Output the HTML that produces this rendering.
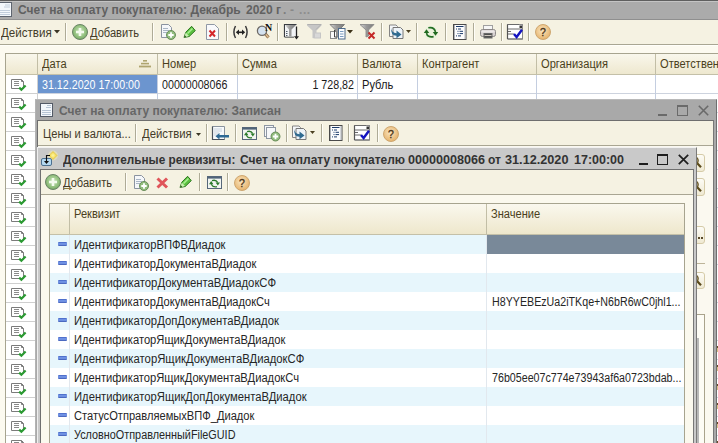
<!DOCTYPE html>
<html><head><meta charset="utf-8">
<style>
*{margin:0;padding:0;box-sizing:border-box}
html,body{width:718px;height:443px;overflow:hidden;background:#fcfaf0;font-family:"Liberation Sans",sans-serif;font-size:11px}
.a{position:absolute}
.t{position:absolute;white-space:nowrap;line-height:13px;font-size:12px;transform:scaleX(0.925);transform-origin:0 0}
.n{transform:scaleX(0.89)}
.b{font-size:12px;font-weight:bold;transform:none}
.sep{position:absolute;width:2px;background:#aeab97;border-right:1px solid #fffef8}
svg{position:absolute;overflow:visible}
</style></head><body>
<div id="root" class="a" style="left:0;top:0;width:718px;height:443px;overflow:hidden">

<!-- ============ MAIN WINDOW ============ -->
<div class="a" style="left:0;top:0;width:718px;height:20px;background:#ababab;border-top:1px solid #5f5f5f"></div>
<div class="a" style="left:0;top:1px;width:718px;height:1px;background:#c4c4c4"></div>
<div class="a" style="left:0;top:19px;width:718px;height:1px;background:#8f8f8f"></div>
<!-- doc icon main title -->
<svg style="left:0;top:2px" width="13" height="15" viewBox="0 0 13 15">
  <rect x="-1.5" y="0.5" width="13" height="14" fill="#f4f8fc" stroke="#5e6570"/>
  <g stroke="#c2cedc"><line x1="5" y1="3" x2="10" y2="3"/><line x1="4" y1="5" x2="10" y2="5"/><line x1="0" y1="8.5" x2="10" y2="8.5"/><line x1="0" y1="10.5" x2="10" y2="10.5"/><line x1="0" y1="12.5" x2="10" y2="12.5"/></g>
</svg>
<div class="t b" style="left:18px;top:4px;color:#606060">Счет на оплату покупателю: Декабрь</div>
<div class="t b" style="left:246px;top:4px;color:#626262">2020 г</div>
<div class="t b" style="left:283px;top:4px;color:#7e7e7e">.</div>
<div class="t b" style="left:290px;top:4px;color:#888">-</div>
<div class="t b" style="left:299px;top:4px;color:#8e8e8e;letter-spacing:0.6px">...</div>

<!-- toolbar main -->
<div class="a" style="left:0;top:20px;width:718px;height:24px;background:#f5f2e2"></div>
<div class="a" style="left:0;top:44px;width:718px;height:1px;background:#a9a693"></div>
<div class="a" style="left:0;top:45px;width:718px;height:1px;background:#fffffa"></div>

<div class="t" style="left:1px;top:27px;color:#433b29;transform:scaleX(0.965)">Действия</div>
<svg style="left:54px;top:30px" width="6" height="4"><path d="M0 0H6L3 3.5Z" fill="#3b3625"/></svg>
<div class="sep" style="left:65px;top:23px;height:18px"></div>

<!-- add circle -->
<svg style="left:72px;top:24px" width="16" height="16" viewBox="0 0 16 16">
  <defs><radialGradient id="gc" cx="0.5" cy="0.45" r="0.6"><stop offset="0" stop-color="#cfe8c0"/><stop offset="0.7" stop-color="#8cbc78"/><stop offset="1" stop-color="#6e9a5e"/></radialGradient></defs>
  <circle cx="8" cy="8" r="7.5" fill="url(#gc)" stroke="#6a8466" stroke-width="1"/>
  <path d="M8 4V12M4 8H12" stroke="#f4fbee" stroke-width="2.6"/>
</svg>
<div class="t" style="left:90px;top:27px;color:#433b29">Добавить</div><div class="a" style="left:90px;top:39px;width:9px;height:1px;background:#8a7840"></div>
<div class="sep" style="left:152px;top:23px;height:18px"></div>

<!-- copy doc plus -->
<svg style="left:160px;top:24px" width="16" height="16" viewBox="0 0 16 16">
  <path d="M1.5 0.5H8.5L11.5 3.5V13.5H1.5Z" fill="#f5f7fa" stroke="#8a93a0"/>
  <g stroke="#a9b6c6"><line x1="3" y1="4.5" x2="8" y2="4.5"/><line x1="3" y1="6.5" x2="9" y2="6.5"/><line x1="3" y1="8.5" x2="7" y2="8.5"/></g>
  <circle cx="11" cy="11" r="4.5" fill="#92bd7e" stroke="#5f8550" stroke-width="0.9"/>
  <path d="M11 8.3V13.7M8.3 11H13.7" stroke="#fff" stroke-width="1.8"/>
</svg>
<!-- pencil -->
<svg style="left:183px;top:26px" width="14" height="13" viewBox="0 0 14 13">
  <path d="M1 11.5L2.8 6.2L8.6 0.3L12.3 4.6L6.2 10.5Z" fill="#5cc040" stroke="#1f6a14" stroke-width="0.9"/>
  <path d="M4.5 7.5L9.5 2.5" stroke="#a8f090" stroke-width="1.6"/>
  <path d="M1 11.5L2.8 6.5L6 10Z" fill="#c8f0b0"/>
  <path d="M1 11.5L1.8 9.3L3.2 10.7Z" fill="#1f4a10"/>
</svg>
<!-- delete doc -->
<svg style="left:206px;top:24px" width="13" height="16" viewBox="0 0 13 16">
  <path d="M0.5 0.5H8.5L12.5 4.5V15.5H0.5Z" fill="#f8f9fb" stroke="#8f98a5"/>
  <path d="M3.5 6.5L9 12.5M9 6.5L3.5 12.5" stroke="#d4262a" stroke-width="2"/>
</svg>
<div class="sep" style="left:226px;top:23px;height:18px"></div>
<!-- (<->) -->
<svg style="left:232px;top:25px" width="17" height="14" viewBox="0 0 17 14">
  <path d="M3.5 1Q0.3 7 3.5 13M13.5 1Q16.7 7 13.5 13" fill="none" stroke="#3a3a3a" stroke-width="1.5"/>
  <path d="M6 7.3H11" stroke="#222" stroke-width="1.6"/>
  <path d="M3.8 7.3L7 4.6V10Z M13.2 7.3L10 4.6V10Z" fill="#222"/>
</svg>
<!-- search N -->
<svg style="left:256px;top:23px" width="17" height="17" viewBox="0 0 17 17">
  <path d="M9 10.5L12.5 14.5" stroke="#8a6a44" stroke-width="3"/>
  <path d="M9 10.5L12.5 14.5" stroke="#e0c098" stroke-width="1.4"/>
  <circle cx="6" cy="7.7" r="4.6" fill="#d4e2f0" stroke="#6e6a66" stroke-width="1.3"/>
  <text x="12.5" y="8" text-anchor="middle" font-family="Liberation Serif" font-weight="bold" font-size="10" fill="#111">N</text>
</svg>
<div class="sep" style="left:277px;top:23px;height:18px"></div>
<!-- filter 1 -->
<svg style="left:284px;top:24px" width="16" height="16" viewBox="0 0 16 16">
  <defs><linearGradient id="fg" x1="0" x2="1"><stop offset="0" stop-color="#d8d8d8"/><stop offset="0.45" stop-color="#9a9a9a"/><stop offset="1" stop-color="#7a7a7a"/></linearGradient></defs>
  <path d="M0.5 13V0.5H12.5" fill="none" stroke="#3a3d42" stroke-width="1.2"/>
  <path d="M0.5 13H10" stroke="#3a3d42" stroke-width="1.2"/>
  <rect x="1" y="1" width="11" height="11.5" fill="#f2f4f6"/>
  <path d="M1 1H12L7.5 5.5V12.5H5V5.5Z" fill="url(#fg)"/>
  <g fill="#55606c"><rect x="2" y="7" width="1.5" height="1"/><rect x="2" y="9" width="1.5" height="1"/><rect x="2" y="11" width="1.5" height="1"/></g>
  <path d="M12.5 2.5V13" stroke="#222" stroke-width="1.3"/><path d="M10 12.3H15L12.5 15.5Z" fill="#222"/>
</svg>
<!-- filter 2 disabled -->
<svg style="left:307px;top:24px" width="16" height="16" viewBox="0 0 16 16">
  <path d="M0 0H14.5L14.5 1.5L9.5 6.5V8.5L14 8.5V14.5H7.5V14.5L5.5 14V6.5L0 1.5Z" fill="#c6c6c6"/>
  <path d="M0.5 0.5H14L9 5.5" fill="none" stroke="#b0b0b0"/>
  <path d="M8 9.5H13V13.5H8Z" fill="#d8d8d8"/>
</svg>
<!-- filter 3 -->
<svg style="left:330px;top:24px" width="16" height="16" viewBox="0 0 16 16">
  <path d="M0 0.5H14.5L9 6V13H5.5V6Z" fill="url(#fg)" stroke="#707070" stroke-width="0.8"/>
  <rect x="0.5" y="7.5" width="6" height="7" fill="#fafafa" stroke="#8a8a8a"/>
  <rect x="8.5" y="4.5" width="6.5" height="10.5" fill="#fafcfe" stroke="#4f6b8a"/>
  <g stroke="#7a9cc0"><line x1="10" y1="7.5" x2="13.5" y2="7.5"/><line x1="10" y1="10" x2="13.5" y2="10"/><line x1="10" y1="12.5" x2="13.5" y2="12.5"/></g>
  <path d="M4.5 6V13H6.5" fill="none" stroke="#444" stroke-width="1"/>
</svg>
<svg style="left:347px;top:30px" width="6" height="4"><path d="M0 0H6L3 3.5Z" fill="#3b3118"/></svg>
<!-- filter 4 with x -->
<svg style="left:360px;top:24px" width="16" height="16" viewBox="0 0 16 16">
  <path d="M0 0.5H14L8.5 6V12L6 13V6Z" fill="url(#fg)" stroke="#8a8a8a" stroke-width="0.9"/>
  <path d="M8.5 8.5L14.5 14.5M14.5 8.5L8.5 14.5" stroke="#c42828" stroke-width="2"/>
</svg>
<div class="sep" style="left:381px;top:23px;height:18px"></div>
<!-- docs arrow -->
<svg style="left:388px;top:24px" width="16" height="16" viewBox="0 0 16 16">
  <path d="M1.5 1H8L9.5 2.5V12.5H1.5Z" fill="#f4f6f8" stroke="#858585"/>
  <path d="M5 3.5H12.5L15 6V14.5H5Z" fill="#edf3f8" stroke="#777"/>
  <path d="M3.2 4Q3.6 9 8.5 9.3V6.6L13.5 10.4L8.5 14.2V11.8Q2.5 11.8 3.2 4Z" fill="#2f6a90"/>
</svg>
<svg style="left:406px;top:30px" width="5" height="3"><path d="M0 0H5L2.5 3Z" fill="#4a3f20"/></svg>
<div class="sep" style="left:416px;top:23px;height:18px"></div>
<!-- refresh -->
<svg style="left:422px;top:26px" width="18" height="14" viewBox="0 0 18 14">
  <circle cx="9" cy="7" r="7" fill="#e4f4d8" opacity="0.6"/>
  <path d="M6.3 1.8Q12.3 0.6 13.5 6" fill="none" stroke="#246e24" stroke-width="1.6"/>
  <path d="M10.8 6H16.2L13.5 9.8Z" fill="#1f6a1f"/>
  <path d="M11.6 10.6Q5.3 11.8 4.5 7" fill="none" stroke="#246e24" stroke-width="1.6"/>
  <path d="M1.8 7H7.2L4.5 3.2Z" fill="#1f6a1f"/>
</svg>
<div class="sep" style="left:445px;top:23px;height:18px"></div>
<!-- list doc -->
<svg style="left:453px;top:24px" width="14" height="16" viewBox="0 0 14 16">
  <rect x="0.5" y="0.5" width="12.5" height="15" fill="#fdfdfd" stroke="#4a4a4a"/>
  <path d="M1.5 1V15M12 1V15" stroke="#b0b4ba"/>
  <path d="M3 2.5H10.5" stroke="#1a3a6a" stroke-width="1"/>
  <g fill="#1a3a6a"><rect x="3" y="4.5" width="1" height="1"/><rect x="4.5" y="6.8" width="1" height="1"/><rect x="4.5" y="9.1" width="1" height="1"/><rect x="3" y="11.4" width="1" height="1"/></g>
  <g stroke="#1a3a6a" stroke-width="1"><path d="M5 5H8"/><path d="M6.5 7.3H10"/><path d="M6.5 9.6H10"/><path d="M5 11.9H8"/></g>
</svg>
<div class="sep" style="left:473px;top:23px;height:18px"></div>
<!-- printer -->
<svg style="left:480px;top:25px" width="16" height="14" viewBox="0 0 16 14">
  <rect x="3.5" y="0.5" width="9" height="5" fill="#f6f6f6" stroke="#a0a0a0"/>
  <rect x="0.5" y="4.5" width="15" height="7" rx="2" fill="#d8d2d2" stroke="#8c8888"/>
  <rect x="1.5" y="5.5" width="13" height="2" fill="#ece8e8"/>
  <rect x="4" y="8.5" width="8" height="4.5" fill="#505050" stroke="#6a6a6a"/>
  <line x1="4.5" y1="10.5" x2="11.5" y2="10.5" stroke="#cfc8c0"/>
</svg>
<div class="sep" style="left:501px;top:23px;height:18px"></div>
<!-- checklist -->
<svg style="left:507px;top:24px" width="17" height="16" viewBox="0 0 17 16">
  <rect x="0.5" y="0.5" width="15" height="14.5" fill="#fff" stroke="#8a8a8a"/>
  <path d="M0.5 0.5V15" stroke="#555" stroke-width="1.2"/>
  <rect x="12.5" y="1.5" width="2.5" height="2.5" fill="#333"/>
  <g stroke="#6a6a6a"><line x1="1" y1="0.5" x2="12" y2="0.5"/><line x1="1" y1="5" x2="15.5" y2="5"/><line x1="1" y1="10" x2="7" y2="10"/><line x1="1" y1="15" x2="15.5" y2="15"/><line x1="1" y1="7.5" x2="4" y2="7.5"/></g>
  <path d="M7 10L9.6 13L15 5.8" fill="none" stroke="#1414c0" stroke-width="2.4"/>
</svg>
<div class="sep" style="left:528px;top:23px;height:18px"></div>
<!-- help -->
<svg style="left:535px;top:24px" width="17" height="17" viewBox="0 0 17 17">
  <defs><radialGradient id="hg" cx="0.45" cy="0.4" r="0.7"><stop offset="0" stop-color="#fae6c0"/><stop offset="1" stop-color="#e2aa5e"/></radialGradient></defs>
  <circle cx="8" cy="8" r="7.5" fill="url(#hg)" stroke="#c9a26a" stroke-width="0.9"/>
  <text x="8" y="12" text-anchor="middle" font-family="Liberation Sans" font-size="10.5" fill="#4a3418" stroke="#4a3418" stroke-width="0.35">?</text>
</svg>

<!-- main table -->
<div class="a" style="left:5px;top:53px;width:713px;height:400px;background:#fff;border-top:1px solid #a7a48f;border-left:1px solid #a7a48f"></div>
<div class="a" style="left:6px;top:54px;width:712px;height:20px;background:linear-gradient(#f9f7ec,#eee8cf)"></div>
<div class="a" style="left:6px;top:74px;width:712px;height:1px;background:#c4c0a8"></div>
<div id="hcols"></div>
<div class="t" style="left:42px;top:58px;color:#4a3f20">Дата</div>
<svg style="left:139px;top:60px" width="13" height="8"><g fill="#aea46e"><rect x="4" y="0" width="4" height="1.6"/><rect x="2" y="2.8" width="8" height="1.6"/><rect x="0" y="5.6" width="12" height="1.8"/></g></svg>
<div class="t" style="left:162px;top:58px;color:#4a3f20">Номер</div>
<div class="t" style="left:242px;top:58px;color:#4a3f20">Сумма</div>
<div class="t" style="left:362px;top:58px;color:#4a3f20">Валюта</div>
<div class="t" style="left:422px;top:58px;color:#4a3f20">Контрагент</div>
<div class="t" style="left:541px;top:58px;color:#4a3f20">Организация</div>
<div class="t" style="left:660px;top:58px;color:#4a3f20">Ответственный</div>
<!-- header column dividers -->
<div class="a" style="left:37px;top:54px;width:1px;height:20px;background:#c2bea6"></div>
<div class="a" style="left:157px;top:54px;width:1px;height:20px;background:#c2bea6"></div>
<div class="a" style="left:237px;top:54px;width:1px;height:20px;background:#c2bea6"></div>
<div class="a" style="left:357px;top:54px;width:1px;height:20px;background:#c2bea6"></div>
<div class="a" style="left:417px;top:54px;width:1px;height:20px;background:#c2bea6"></div>
<div class="a" style="left:536px;top:54px;width:1px;height:20px;background:#c2bea6"></div>
<div class="a" style="left:655px;top:54px;width:1px;height:20px;background:#c2bea6"></div>
<!-- body grid -->
<div class="a" style="left:6px;top:75px;width:712px;height:380px;background-image:linear-gradient(#cdd3de 1px,transparent 1px);background-size:100% 19px;background-position:0 18px"></div>
<div class="a" style="left:6px;top:75px;width:31px;height:380px;background-image:linear-gradient(#cfcfcf 1px,transparent 1px);background-size:100% 19px;background-position:0 18px"></div>
<div class="a" style="left:37px;top:75px;width:1px;height:380px;background:#d0d0d0"></div>
<div class="a" style="left:157px;top:75px;width:1px;height:380px;background:#c4cee0"></div>
<div class="a" style="left:237px;top:75px;width:1px;height:380px;background:#c4cee0"></div>
<div class="a" style="left:357px;top:75px;width:1px;height:380px;background:#c4cee0"></div>
<div class="a" style="left:417px;top:75px;width:1px;height:380px;background:#c4cee0"></div>
<div class="a" style="left:536px;top:75px;width:1px;height:380px;background:#c4cee0"></div>
<div class="a" style="left:655px;top:75px;width:1px;height:380px;background:#c4cee0"></div>
<!-- selected cell -->
<div class="a" style="left:38px;top:75px;width:119px;height:18px;background:#6c95cf"></div>
<div class="t n" style="left:42px;top:79px;color:#fff">31.12.2020 17:00:00</div>
<div class="t n" style="left:162px;top:79px;color:#1a1a1a">00000008066</div>
<div class="t n" style="left:300px;top:79px;color:#1a1a1a;width:54px;text-align:right;transform-origin:100% 0">1 728,82</div>
<div class="t" style="left:362px;top:79px;color:#1a1a1a">Рубль</div>
<svg style="left:11px;top:79px" width="16" height="12" viewBox="0 0 16 12">
<path d="M0.5 0.5H10.5L12.5 2.5V9.5H0.5Z" fill="#fff" stroke="#7b7b7b"/>
<path d="M10.5 0.5V2.5H12.5" fill="none" stroke="#7b7b7b"/>
<g stroke="#8a8a8a"><line x1="3" y1="2.5" x2="8" y2="2.5"/><line x1="3" y1="4.5" x2="8" y2="4.5"/><line x1="3" y1="6.5" x2="8" y2="6.5"/></g>
<path d="M8.2 8.6L10.4 10.8L14.6 6.4" fill="none" stroke="#2b9a32" stroke-width="2.2"/>
</svg><svg style="left:11px;top:98px" width="16" height="12" viewBox="0 0 16 12">
<path d="M0.5 0.5H10.5L12.5 2.5V9.5H0.5Z" fill="#fff" stroke="#7b7b7b"/>
<path d="M10.5 0.5V2.5H12.5" fill="none" stroke="#7b7b7b"/>
<g stroke="#8a8a8a"><line x1="3" y1="2.5" x2="8" y2="2.5"/><line x1="3" y1="4.5" x2="8" y2="4.5"/><line x1="3" y1="6.5" x2="8" y2="6.5"/></g>
<path d="M8.2 8.6L10.4 10.8L14.6 6.4" fill="none" stroke="#2b9a32" stroke-width="2.2"/>
</svg><svg style="left:11px;top:117px" width="16" height="12" viewBox="0 0 16 12">
<path d="M0.5 0.5H10.5L12.5 2.5V9.5H0.5Z" fill="#fff" stroke="#7b7b7b"/>
<path d="M10.5 0.5V2.5H12.5" fill="none" stroke="#7b7b7b"/>
<g stroke="#8a8a8a"><line x1="3" y1="2.5" x2="8" y2="2.5"/><line x1="3" y1="4.5" x2="8" y2="4.5"/><line x1="3" y1="6.5" x2="8" y2="6.5"/></g>
<path d="M8.2 8.6L10.4 10.8L14.6 6.4" fill="none" stroke="#2b9a32" stroke-width="2.2"/>
</svg><svg style="left:11px;top:136px" width="16" height="12" viewBox="0 0 16 12">
<path d="M0.5 0.5H10.5L12.5 2.5V9.5H0.5Z" fill="#fff" stroke="#7b7b7b"/>
<path d="M10.5 0.5V2.5H12.5" fill="none" stroke="#7b7b7b"/>
<g stroke="#8a8a8a"><line x1="3" y1="2.5" x2="8" y2="2.5"/><line x1="3" y1="4.5" x2="8" y2="4.5"/><line x1="3" y1="6.5" x2="8" y2="6.5"/></g>
<path d="M8.2 8.6L10.4 10.8L14.6 6.4" fill="none" stroke="#2b9a32" stroke-width="2.2"/>
</svg><svg style="left:11px;top:155px" width="16" height="12" viewBox="0 0 16 12">
<path d="M0.5 0.5H10.5L12.5 2.5V9.5H0.5Z" fill="#fff" stroke="#7b7b7b"/>
<path d="M10.5 0.5V2.5H12.5" fill="none" stroke="#7b7b7b"/>
<g stroke="#8a8a8a"><line x1="3" y1="2.5" x2="8" y2="2.5"/><line x1="3" y1="4.5" x2="8" y2="4.5"/><line x1="3" y1="6.5" x2="8" y2="6.5"/></g>
<path d="M8.2 8.6L10.4 10.8L14.6 6.4" fill="none" stroke="#2b9a32" stroke-width="2.2"/>
</svg><svg style="left:11px;top:174px" width="16" height="12" viewBox="0 0 16 12">
<path d="M0.5 0.5H10.5L12.5 2.5V9.5H0.5Z" fill="#fff" stroke="#7b7b7b"/>
<path d="M10.5 0.5V2.5H12.5" fill="none" stroke="#7b7b7b"/>
<g stroke="#8a8a8a"><line x1="3" y1="2.5" x2="8" y2="2.5"/><line x1="3" y1="4.5" x2="8" y2="4.5"/><line x1="3" y1="6.5" x2="8" y2="6.5"/></g>
<path d="M8.2 8.6L10.4 10.8L14.6 6.4" fill="none" stroke="#2b9a32" stroke-width="2.2"/>
</svg><svg style="left:11px;top:193px" width="16" height="12" viewBox="0 0 16 12">
<path d="M0.5 0.5H10.5L12.5 2.5V9.5H0.5Z" fill="#fff" stroke="#7b7b7b"/>
<path d="M10.5 0.5V2.5H12.5" fill="none" stroke="#7b7b7b"/>
<g stroke="#8a8a8a"><line x1="3" y1="2.5" x2="8" y2="2.5"/><line x1="3" y1="4.5" x2="8" y2="4.5"/><line x1="3" y1="6.5" x2="8" y2="6.5"/></g>
<path d="M8.2 8.6L10.4 10.8L14.6 6.4" fill="none" stroke="#2b9a32" stroke-width="2.2"/>
</svg><svg style="left:11px;top:212px" width="16" height="12" viewBox="0 0 16 12">
<path d="M0.5 0.5H10.5L12.5 2.5V9.5H0.5Z" fill="#fff" stroke="#7b7b7b"/>
<path d="M10.5 0.5V2.5H12.5" fill="none" stroke="#7b7b7b"/>
<g stroke="#8a8a8a"><line x1="3" y1="2.5" x2="8" y2="2.5"/><line x1="3" y1="4.5" x2="8" y2="4.5"/><line x1="3" y1="6.5" x2="8" y2="6.5"/></g>
<path d="M8.2 8.6L10.4 10.8L14.6 6.4" fill="none" stroke="#2b9a32" stroke-width="2.2"/>
</svg><svg style="left:11px;top:231px" width="16" height="12" viewBox="0 0 16 12">
<path d="M0.5 0.5H10.5L12.5 2.5V9.5H0.5Z" fill="#fff" stroke="#7b7b7b"/>
<path d="M10.5 0.5V2.5H12.5" fill="none" stroke="#7b7b7b"/>
<g stroke="#8a8a8a"><line x1="3" y1="2.5" x2="8" y2="2.5"/><line x1="3" y1="4.5" x2="8" y2="4.5"/><line x1="3" y1="6.5" x2="8" y2="6.5"/></g>
<path d="M8.2 8.6L10.4 10.8L14.6 6.4" fill="none" stroke="#2b9a32" stroke-width="2.2"/>
</svg><svg style="left:11px;top:250px" width="16" height="12" viewBox="0 0 16 12">
<path d="M0.5 0.5H10.5L12.5 2.5V9.5H0.5Z" fill="#fff" stroke="#7b7b7b"/>
<path d="M10.5 0.5V2.5H12.5" fill="none" stroke="#7b7b7b"/>
<g stroke="#8a8a8a"><line x1="3" y1="2.5" x2="8" y2="2.5"/><line x1="3" y1="4.5" x2="8" y2="4.5"/><line x1="3" y1="6.5" x2="8" y2="6.5"/></g>
<path d="M8.2 8.6L10.4 10.8L14.6 6.4" fill="none" stroke="#2b9a32" stroke-width="2.2"/>
</svg><svg style="left:11px;top:269px" width="16" height="12" viewBox="0 0 16 12">
<path d="M0.5 0.5H10.5L12.5 2.5V9.5H0.5Z" fill="#fff" stroke="#7b7b7b"/>
<path d="M10.5 0.5V2.5H12.5" fill="none" stroke="#7b7b7b"/>
<g stroke="#8a8a8a"><line x1="3" y1="2.5" x2="8" y2="2.5"/><line x1="3" y1="4.5" x2="8" y2="4.5"/><line x1="3" y1="6.5" x2="8" y2="6.5"/></g>
<path d="M8.2 8.6L10.4 10.8L14.6 6.4" fill="none" stroke="#2b9a32" stroke-width="2.2"/>
</svg><svg style="left:11px;top:288px" width="16" height="12" viewBox="0 0 16 12">
<path d="M0.5 0.5H10.5L12.5 2.5V9.5H0.5Z" fill="#fff" stroke="#7b7b7b"/>
<path d="M10.5 0.5V2.5H12.5" fill="none" stroke="#7b7b7b"/>
<g stroke="#8a8a8a"><line x1="3" y1="2.5" x2="8" y2="2.5"/><line x1="3" y1="4.5" x2="8" y2="4.5"/><line x1="3" y1="6.5" x2="8" y2="6.5"/></g>
<path d="M8.2 8.6L10.4 10.8L14.6 6.4" fill="none" stroke="#2b9a32" stroke-width="2.2"/>
</svg><svg style="left:11px;top:307px" width="16" height="12" viewBox="0 0 16 12">
<path d="M0.5 0.5H10.5L12.5 2.5V9.5H0.5Z" fill="#fff" stroke="#7b7b7b"/>
<path d="M10.5 0.5V2.5H12.5" fill="none" stroke="#7b7b7b"/>
<g stroke="#8a8a8a"><line x1="3" y1="2.5" x2="8" y2="2.5"/><line x1="3" y1="4.5" x2="8" y2="4.5"/><line x1="3" y1="6.5" x2="8" y2="6.5"/></g>
<path d="M8.2 8.6L10.4 10.8L14.6 6.4" fill="none" stroke="#2b9a32" stroke-width="2.2"/>
</svg><svg style="left:11px;top:326px" width="16" height="12" viewBox="0 0 16 12">
<path d="M0.5 0.5H10.5L12.5 2.5V9.5H0.5Z" fill="#fff" stroke="#7b7b7b"/>
<path d="M10.5 0.5V2.5H12.5" fill="none" stroke="#7b7b7b"/>
<g stroke="#8a8a8a"><line x1="3" y1="2.5" x2="8" y2="2.5"/><line x1="3" y1="4.5" x2="8" y2="4.5"/><line x1="3" y1="6.5" x2="8" y2="6.5"/></g>
<path d="M8.2 8.6L10.4 10.8L14.6 6.4" fill="none" stroke="#2b9a32" stroke-width="2.2"/>
</svg><svg style="left:11px;top:345px" width="16" height="12" viewBox="0 0 16 12">
<path d="M0.5 0.5H10.5L12.5 2.5V9.5H0.5Z" fill="#fff" stroke="#7b7b7b"/>
<path d="M10.5 0.5V2.5H12.5" fill="none" stroke="#7b7b7b"/>
<g stroke="#8a8a8a"><line x1="3" y1="2.5" x2="8" y2="2.5"/><line x1="3" y1="4.5" x2="8" y2="4.5"/><line x1="3" y1="6.5" x2="8" y2="6.5"/></g>
<path d="M8.2 8.6L10.4 10.8L14.6 6.4" fill="none" stroke="#2b9a32" stroke-width="2.2"/>
</svg><svg style="left:11px;top:364px" width="16" height="12" viewBox="0 0 16 12">
<path d="M0.5 0.5H10.5L12.5 2.5V9.5H0.5Z" fill="#fff" stroke="#7b7b7b"/>
<path d="M10.5 0.5V2.5H12.5" fill="none" stroke="#7b7b7b"/>
<g stroke="#8a8a8a"><line x1="3" y1="2.5" x2="8" y2="2.5"/><line x1="3" y1="4.5" x2="8" y2="4.5"/><line x1="3" y1="6.5" x2="8" y2="6.5"/></g>
<path d="M8.2 8.6L10.4 10.8L14.6 6.4" fill="none" stroke="#2b9a32" stroke-width="2.2"/>
</svg><svg style="left:11px;top:383px" width="16" height="12" viewBox="0 0 16 12">
<path d="M0.5 0.5H10.5L12.5 2.5V9.5H0.5Z" fill="#fff" stroke="#7b7b7b"/>
<path d="M10.5 0.5V2.5H12.5" fill="none" stroke="#7b7b7b"/>
<g stroke="#8a8a8a"><line x1="3" y1="2.5" x2="8" y2="2.5"/><line x1="3" y1="4.5" x2="8" y2="4.5"/><line x1="3" y1="6.5" x2="8" y2="6.5"/></g>
<path d="M8.2 8.6L10.4 10.8L14.6 6.4" fill="none" stroke="#2b9a32" stroke-width="2.2"/>
</svg><svg style="left:11px;top:402px" width="16" height="12" viewBox="0 0 16 12">
<path d="M0.5 0.5H10.5L12.5 2.5V9.5H0.5Z" fill="#fff" stroke="#7b7b7b"/>
<path d="M10.5 0.5V2.5H12.5" fill="none" stroke="#7b7b7b"/>
<g stroke="#8a8a8a"><line x1="3" y1="2.5" x2="8" y2="2.5"/><line x1="3" y1="4.5" x2="8" y2="4.5"/><line x1="3" y1="6.5" x2="8" y2="6.5"/></g>
<path d="M8.2 8.6L10.4 10.8L14.6 6.4" fill="none" stroke="#2b9a32" stroke-width="2.2"/>
</svg><svg style="left:11px;top:421px" width="16" height="12" viewBox="0 0 16 12">
<path d="M0.5 0.5H10.5L12.5 2.5V9.5H0.5Z" fill="#fff" stroke="#7b7b7b"/>
<path d="M10.5 0.5V2.5H12.5" fill="none" stroke="#7b7b7b"/>
<g stroke="#8a8a8a"><line x1="3" y1="2.5" x2="8" y2="2.5"/><line x1="3" y1="4.5" x2="8" y2="4.5"/><line x1="3" y1="6.5" x2="8" y2="6.5"/></g>
<path d="M8.2 8.6L10.4 10.8L14.6 6.4" fill="none" stroke="#2b9a32" stroke-width="2.2"/>
</svg><svg style="left:11px;top:440px" width="16" height="12" viewBox="0 0 16 12">
<path d="M0.5 0.5H10.5L12.5 2.5V9.5H0.5Z" fill="#fff" stroke="#7b7b7b"/>
<path d="M10.5 0.5V2.5H12.5" fill="none" stroke="#7b7b7b"/>
<g stroke="#8a8a8a"><line x1="3" y1="2.5" x2="8" y2="2.5"/><line x1="3" y1="4.5" x2="8" y2="4.5"/><line x1="3" y1="6.5" x2="8" y2="6.5"/></g>
<path d="M8.2 8.6L10.4 10.8L14.6 6.4" fill="none" stroke="#2b9a32" stroke-width="2.2"/>
</svg>

<!-- ============ WINDOW 2 ============ -->
<div class="a" style="left:35px;top:99px;width:682px;height:360px;background:#a9a9a9;border-right:1px solid #6f6f6f;border-left:1px solid #b3b3b3;border-top:1px solid #b9b9b9"></div>
<svg style="left:40px;top:103px" width="13" height="14" viewBox="0 0 13 14">
  <rect x="0.5" y="0.5" width="12" height="13" fill="#f3f7fb" stroke="#535a66"/>
  <g stroke="#b6c4d4"><line x1="7" y1="2.5" x2="11" y2="2.5"/><line x1="6" y1="4.5" x2="11" y2="4.5"/><line x1="2" y1="7.5" x2="11" y2="7.5"/><line x1="2" y1="9.5" x2="11" y2="9.5"/><line x1="2" y1="11.5" x2="11" y2="11.5"/></g>
</svg>
<div class="t b" style="left:59px;top:105px;color:#666">Счет на оплату покупателю: Записан</div>
<!-- title buttons -->
<div class="a" style="left:658px;top:114px;width:9px;height:2px;background:#6a6a6a"></div>
<div class="a" style="left:677px;top:105px;width:11px;height:11px;border:1px solid #6a6a6a;border-top-width:2px"></div>
<svg style="left:698px;top:105px" width="11" height="11" viewBox="0 0 11 11"><path d="M0.8 0.8L10.2 10.2M10.2 0.8L0.8 10.2" stroke="#6a6a6a" stroke-width="1.6"/></svg>
<!-- content -->
<div class="a" style="left:37px;top:120px;width:677px;height:340px;background:#fbf9f0;border-left:1px solid #6e6e6e;border-top:1px solid #6e6e6e;border-right:1px solid #777"></div>
<div class="a" style="left:38px;top:121px;width:675px;height:24px;background:#f5f2e2"></div>
<div class="a" style="left:38px;top:145px;width:675px;height:1px;background:#a9a693"></div>
<div class="t" style="left:43px;top:128px;color:#433b29">Цены и валюта...</div>
<div class="sep" style="left:135px;top:124px;height:18px"></div>
<div class="t" style="left:142px;top:128px;color:#433b29;transform:scaleX(0.945)">Действия</div>
<svg style="left:196px;top:133px" width="5" height="3"><path d="M0 0H5L2.5 3Z" fill="#3b3625"/></svg>
<div class="sep" style="left:206px;top:124px;height:18px"></div>
<!-- doc left arrow -->
<svg style="left:212px;top:126px" width="18" height="15" viewBox="0 0 18 15">
  <path d="M0.5 0.5H12.5V13.5H0.5Z" fill="#f8fafc" stroke="#8a939e"/>
  <path d="M0.5 0.5V13.5H12.5" fill="none" stroke="#4a525c" stroke-width="1.2"/>
  <g stroke="#9aacc0" stroke-dasharray="1 1"><line x1="2.5" y1="3" x2="10" y2="3"/><line x1="2.5" y1="5" x2="10" y2="5"/><line x1="2.5" y1="7" x2="7" y2="7"/><line x1="2.5" y1="9" x2="7" y2="9"/></g>
  <path d="M3.5 10.2L7.5 7V8.9H17V11.5H7.5V13.4Z" fill="#2f6a95"/>
</svg>
<div class="sep" style="left:235px;top:124px;height:18px"></div>
<!-- window refresh -->
<svg style="left:242px;top:127px" width="15" height="13" viewBox="0 0 15 13">
  <rect x="0.5" y="0.5" width="14" height="12" fill="#f2f5f2" stroke="#56677a"/>
  <rect x="1" y="1" width="13" height="1.6" fill="#50647a"/>
  <path d="M5 4.6Q9 3.4 10.8 6.5" fill="none" stroke="#2a7a2a" stroke-width="1.3"/><path d="M8.6 6.5H13L10.8 9.5Z" fill="#2a7a2a"/>
  <path d="M10 10.6Q6 11.6 4.2 8.2" fill="none" stroke="#2a7a2a" stroke-width="1.3"/><path d="M2 8.2H6.4L4.2 5Z" fill="#2a7a2a"/>
</svg>
<!-- multi copy plus -->
<svg style="left:264px;top:125px" width="17" height="17" viewBox="0 0 17 17">
  <rect x="0.5" y="0.5" width="9" height="11" fill="#f6f7f9" stroke="#8e97a3"/>
  <rect x="2.5" y="2.5" width="9" height="11" fill="#f6f7f9" stroke="#8e97a3"/>
  <circle cx="11.5" cy="11.5" r="4.5" fill="#90bb7c" stroke="#5f8550" stroke-width="0.9"/>
  <path d="M11.5 8.8V14.2M8.8 11.5H14.2" stroke="#fff" stroke-width="1.8"/>
</svg>
<div class="sep" style="left:286px;top:124px;height:18px"></div>
<svg style="left:291px;top:125px" width="16" height="16" viewBox="0 0 16 16">
  <path d="M1.5 1H8L9.5 2.5V12.5H1.5Z" fill="#f4f6f8" stroke="#858585"/>
  <path d="M5 3.5H12.5L15 6V14.5H5Z" fill="#edf3f8" stroke="#777"/>
  <path d="M3.2 4Q3.6 9 8.5 9.3V6.6L13.5 10.4L8.5 14.2V11.8Q2.5 11.8 3.2 4Z" fill="#2f6a90"/>
</svg>
<svg style="left:310px;top:131px" width="5" height="3"><path d="M0 0H5L2.5 3Z" fill="#4a3f20"/></svg>
<div class="sep" style="left:321px;top:124px;height:18px"></div>
<svg style="left:329px;top:125px" width="14" height="16" viewBox="0 0 14 16">
  <rect x="0.5" y="0.5" width="12.5" height="15" fill="#fdfdfd" stroke="#4a4a4a"/>
  <path d="M1.5 1V15M12 1V15" stroke="#b0b4ba"/>
  <path d="M3 2.5H10.5" stroke="#1a3a6a" stroke-width="1"/>
  <g fill="#1a3a6a"><rect x="3" y="4.5" width="1" height="1"/><rect x="4.5" y="6.8" width="1" height="1"/><rect x="4.5" y="9.1" width="1" height="1"/><rect x="3" y="11.4" width="1" height="1"/></g>
  <g stroke="#1a3a6a" stroke-width="1"><path d="M5 5H8"/><path d="M6.5 7.3H10"/><path d="M6.5 9.6H10"/><path d="M5 11.9H8"/></g>
</svg>
<div class="sep" style="left:348px;top:124px;height:18px"></div>
<svg style="left:354px;top:125px" width="17" height="16" viewBox="0 0 17 16">
  <rect x="0.5" y="0.5" width="15" height="14.5" fill="#fff" stroke="#8a8a8a"/>
  <path d="M0.5 0.5V15" stroke="#555" stroke-width="1.2"/>
  <rect x="12.5" y="1.5" width="2.5" height="2.5" fill="#333"/>
  <g stroke="#6a6a6a"><line x1="1" y1="0.5" x2="12" y2="0.5"/><line x1="1" y1="5" x2="15.5" y2="5"/><line x1="1" y1="10" x2="7" y2="10"/><line x1="1" y1="15" x2="15.5" y2="15"/><line x1="1" y1="7.5" x2="4" y2="7.5"/></g>
  <path d="M7 10L9.6 13L15 5.8" fill="none" stroke="#1414c0" stroke-width="2.4"/>
</svg>
<div class="sep" style="left:377px;top:124px;height:18px"></div>
<svg style="left:383px;top:126px" width="17" height="17" viewBox="0 0 17 17">
  <circle cx="8" cy="8" r="7.5" fill="url(#hg)" stroke="#c9a26a" stroke-width="0.9"/>
  <text x="8" y="12" text-anchor="middle" font-family="Liberation Sans" font-size="10.5" fill="#4a3418" stroke="#4a3418" stroke-width="0.35">?</text>
</svg>

<!-- win2 right strip -->
<div class="a" style="left:690px;top:154px;width:15px;height:18px;border:1px solid #d5cba8;border-radius:3px;background:linear-gradient(#fdfcf6,#efe9d2)"></div>
<svg style="left:690px;top:155px" width="14" height="16" viewBox="0 0 14 16"><circle cx="4.5" cy="5.5" r="3.6" fill="none" stroke="#6b5a2a" stroke-width="1.5"/><path d="M7.2 8.2L11 12.2" stroke="#5a4a1a" stroke-width="2.2"/></svg>
<div class="a" style="left:690px;top:178px;width:15px;height:18px;border:1px solid #d5cba8;border-radius:3px;background:linear-gradient(#fdfcf6,#efe9d2)"></div>
<svg style="left:690px;top:179px" width="14" height="16" viewBox="0 0 14 16"><circle cx="4.5" cy="5.5" r="3.6" fill="none" stroke="#6b5a2a" stroke-width="1.5"/><path d="M7.2 8.2L11 12.2" stroke="#5a4a1a" stroke-width="2.2"/></svg>
<div class="a" style="left:690px;top:226px;width:15px;height:18px;border:1px solid #d5cba8;border-radius:3px;background:linear-gradient(#fdfcf6,#efe9d2)"></div>
<div class="a" style="left:698px;top:237px;width:2px;height:2px;background:#5a4a2a"></div><div class="a" style="left:701px;top:237px;width:2px;height:2px;background:#5a4a2a"></div>
<div class="a" style="left:690px;top:263px;width:15px;height:1px;background:#bdb59a"></div>
<div class="a" style="left:690px;top:272px;width:15px;height:17px;border:1px solid #d5cba8;border-radius:3px;background:linear-gradient(#fdfcf6,#efe9d2)"></div>
<svg style="left:690px;top:273px" width="14" height="16" viewBox="0 0 14 16"><circle cx="4.5" cy="5.5" r="3.6" fill="none" stroke="#6b5a2a" stroke-width="1.5"/><path d="M7.2 8.2L11 12.2" stroke="#5a4a1a" stroke-width="2.2"/></svg>
<div class="a" style="left:690px;top:314px;width:15px;height:140px;border-top:1px solid #a9a38c;border-right:1px solid #a9a38c;background:#fdfcf5"></div>
<div class="a" style="left:697px;top:338px;width:2px;height:110px;background:#b8b8b8"></div>


<!-- ============ WINDOW 3 ============ -->
<div class="a" style="left:37px;top:147px;width:660px;height:310px;background:#c9c9c9;border-right:1px solid #7a7a7a;border-left:1px solid #eeeeee;border-top:1px solid #f2f2f2"></div>
<svg style="left:41px;top:151px" width="17" height="16" viewBox="0 0 17 16">
  <defs><radialGradient id="dg"><stop offset="0" stop-color="#fff7a0"/><stop offset="1" stop-color="#f0d040"/></radialGradient></defs>
  <circle cx="12" cy="4.5" r="5" fill="#f8f0b0" opacity="0.5"/>
  <path d="M12 0.5L16 4.5L12 8.5L8 4.5Z" fill="url(#dg)" stroke="#e0c030" stroke-width="0.6"/>
  <rect x="0.5" y="7.5" width="10" height="7" rx="1.5" fill="#b4d8f0" stroke="#4c7090"/>
  <path d="M5.5 4.5H9" stroke="#111" stroke-width="1"/><path d="M5.5 4V10.5" stroke="#111" stroke-width="1.1"/>
  <path d="M3 10H8L5.5 13Z" fill="#111"/>
</svg>
<div class="t b" style="left:63px;top:154px;color:#333;transform:scaleX(0.98)">Дополнительные реквизиты:</div><div class="t b" style="left:240px;top:154px;color:#333;transform:scaleX(1)">Счет на оплату покупателю</div><div class="t b" style="left:407.5px;top:154px;color:#333;transform:scaleX(1.05)">00000008066</div><div class="t b" style="left:488px;top:154px;color:#333;transform:scaleX(1)">от</div><div class="t b" style="left:505px;top:154px;color:#333;transform:scaleX(1.057)">31.12.2020</div><div class="t b" style="left:574px;top:154px;color:#333;transform:scaleX(1.04)">17:00:00</div>
<div class="a" style="left:639px;top:163px;width:9px;height:2px;background:#1e1e1e"></div>
<div class="a" style="left:657px;top:154px;width:11px;height:11px;border:1.5px solid #1e1e1e;border-top-width:2px"></div>
<svg style="left:678px;top:154px" width="11" height="11" viewBox="0 0 11 11"><path d="M0.8 0.8L10.2 10.2M10.2 0.8L0.8 10.2" stroke="#1e1e1e" stroke-width="1.7"/></svg>
<div class="a" style="left:40px;top:169px;width:654px;height:300px;background:#fbf9ee;border-left:1px solid #6f6f6f;border-top:1px solid #6f6f6f;border-right:1px solid #777"></div>
<div class="a" style="left:41px;top:170px;width:652px;height:24px;background:#f5f2e2"></div>
<div class="a" style="left:41px;top:194px;width:652px;height:1px;background:#a9a693"></div>
<svg style="left:45px;top:174px" width="16" height="16" viewBox="0 0 16 16">
  <circle cx="8" cy="8" r="7.5" fill="url(#gc)" stroke="#6a8466" stroke-width="1"/>
  <path d="M8 4V12M4 8H12" stroke="#f4fbee" stroke-width="2.6"/>
</svg>
<div class="t" style="left:63px;top:177px;color:#433b29">Добавить</div><div class="a" style="left:63px;top:188px;width:9px;height:1px;background:#8a7840"></div>
<div class="sep" style="left:125px;top:173px;height:18px"></div>
<svg style="left:133px;top:175px" width="16" height="16" viewBox="0 0 16 16">
  <path d="M1.5 0.5H8.5L11.5 3.5V13.5H1.5Z" fill="#f5f7fa" stroke="#8a93a0"/>
  <g stroke="#a9b6c6"><line x1="3" y1="4.5" x2="8" y2="4.5"/><line x1="3" y1="6.5" x2="9" y2="6.5"/><line x1="3" y1="8.5" x2="7" y2="8.5"/></g>
  <circle cx="11" cy="11" r="4.5" fill="#92bd7e" stroke="#5f8550" stroke-width="0.9"/>
  <path d="M11 8.3V13.7M8.3 11H13.7" stroke="#fff" stroke-width="1.8"/>
</svg>
<svg style="left:156px;top:177px" width="13" height="12" viewBox="0 0 13 12"><path d="M1.5 1.5L11 10.5M11 1.5L1.5 10.5" stroke="#e0555a" stroke-width="3"/></svg>
<svg style="left:179px;top:176px" width="14" height="13" viewBox="0 0 14 13">
  <path d="M1 11.5L2.8 6.2L8.6 0.3L12.3 4.6L6.2 10.5Z" fill="#5cc040" stroke="#1f6a14" stroke-width="0.9"/>
  <path d="M4.5 7.5L9.5 2.5" stroke="#a8f090" stroke-width="1.6"/>
  <path d="M1 11.5L2.8 6.5L6 10Z" fill="#c8f0b0"/>
  <path d="M1 11.5L1.8 9.3L3.2 10.7Z" fill="#1f4a10"/>
</svg>
<div class="sep" style="left:199px;top:173px;height:18px"></div>
<svg style="left:207px;top:176px" width="15" height="13" viewBox="0 0 15 13">
  <rect x="0.5" y="0.5" width="14" height="12" fill="#f2f5f2" stroke="#56677a"/>
  <rect x="1" y="1" width="13" height="1.6" fill="#50647a"/>
  <path d="M5 4.6Q9 3.4 10.8 6.5" fill="none" stroke="#2a7a2a" stroke-width="1.3"/><path d="M8.6 6.5H13L10.8 9.5Z" fill="#2a7a2a"/>
  <path d="M10 10.6Q6 11.6 4.2 8.2" fill="none" stroke="#2a7a2a" stroke-width="1.3"/><path d="M2 8.2H6.4L4.2 5Z" fill="#2a7a2a"/>
</svg>
<div class="sep" style="left:227px;top:173px;height:18px"></div>
<svg style="left:234px;top:175px" width="17" height="17" viewBox="0 0 17 17">
  <circle cx="8" cy="8" r="7.5" fill="url(#hg)" stroke="#c9a26a" stroke-width="0.9"/>
  <text x="8" y="12" text-anchor="middle" font-family="Liberation Sans" font-size="10.5" fill="#4a3418" stroke="#4a3418" stroke-width="0.35">?</text>
</svg>
<!-- table 3 -->
<div class="a" style="left:49px;top:203px;width:636px;height:260px;background:#fff;border:1px solid #a7a48f"></div>
<div class="a" style="left:50px;top:204px;width:634px;height:30px;background:linear-gradient(#faf8ee,#eee7cc)"></div>
<div class="a" style="left:50px;top:234px;width:634px;height:1px;background:#c4c0a8"></div>
<div class="a" style="left:69px;top:204px;width:1px;height:30px;background:#c2bea6"></div>
<div class="a" style="left:486px;top:204px;width:1px;height:30px;background:#c2bea6"></div>
<div class="t" style="left:74px;top:208px;color:#4a3f20">Реквизит</div>
<div class="t" style="left:491px;top:208px;color:#4a3f20">Значение</div>
<div class="a" style="left:50px;top:235px;width:634px;height:220px;background:repeating-linear-gradient(#e7f6fc 0,#e7f6fc 19px,#fff 19px,#fff 38px);background-position:0 0"></div>
<div class="a" style="left:69px;top:235px;width:1px;height:220px;background:#e2e8ee"></div>
<div class="a" style="left:486px;top:235px;width:1px;height:220px;background:#e2e8ee"></div>
<div class="a" style="left:487px;top:235px;width:197px;height:19px;background:#798999"></div>
<div class="a" style="left:58px;top:242px;width:9px;height:4px;background:linear-gradient(#4060c0,#7fa2f0 50%,#3a56b0);border-radius:1px"></div><div class="t" style="left:74px;top:239px;color:#262626;transform:scaleX(0.9338)">ИдентификаторВПФВДиадок</div><div class="a" style="left:58px;top:261px;width:9px;height:4px;background:linear-gradient(#4060c0,#7fa2f0 50%,#3a56b0);border-radius:1px"></div><div class="t" style="left:74px;top:258px;color:#262626;transform:scaleX(0.9287)">ИдентификаторДокументаВДиадок</div><div class="a" style="left:58px;top:280px;width:9px;height:4px;background:linear-gradient(#4060c0,#7fa2f0 50%,#3a56b0);border-radius:1px"></div><div class="t" style="left:74px;top:277px;color:#262626;transform:scaleX(0.9444)">ИдентификаторДокументаВДиадокСФ</div><div class="a" style="left:58px;top:299px;width:9px;height:4px;background:linear-gradient(#4060c0,#7fa2f0 50%,#3a56b0);border-radius:1px"></div><div class="t" style="left:74px;top:296px;color:#262626;transform:scaleX(0.9278)">ИдентификаторДокументаВДиадокСч</div><div class="t n" style="left:492px;top:296px;color:#262626">H8YYEBEzUa2iTKqe+N6bR6wC0jhl1...</div><div class="a" style="left:58px;top:318px;width:9px;height:4px;background:linear-gradient(#4060c0,#7fa2f0 50%,#3a56b0);border-radius:1px"></div><div class="t" style="left:74px;top:315px;color:#262626;transform:scaleX(0.9413)">ИдентификаторДопДокументаВДиадок</div><div class="a" style="left:58px;top:337px;width:9px;height:4px;background:linear-gradient(#4060c0,#7fa2f0 50%,#3a56b0);border-radius:1px"></div><div class="t" style="left:74px;top:334px;color:#262626;transform:scaleX(0.9321)">ИдентификаторЯщикДокументаВДиадок</div><div class="a" style="left:58px;top:356px;width:9px;height:4px;background:linear-gradient(#4060c0,#7fa2f0 50%,#3a56b0);border-radius:1px"></div><div class="t" style="left:74px;top:353px;color:#262626;transform:scaleX(0.9417)">ИдентификаторЯщикДокументаВДиадокСФ</div><div class="a" style="left:58px;top:375px;width:9px;height:4px;background:linear-gradient(#4060c0,#7fa2f0 50%,#3a56b0);border-radius:1px"></div><div class="t" style="left:74px;top:372px;color:#262626;transform:scaleX(0.9315)">ИдентификаторЯщикДокументаВДиадокСч</div><div class="t n" style="left:492px;top:372px;color:#262626">76b05ee07c774e73943af6a0723bdab...</div><div class="a" style="left:58px;top:394px;width:9px;height:4px;background:linear-gradient(#4060c0,#7fa2f0 50%,#3a56b0);border-radius:1px"></div><div class="t" style="left:74px;top:391px;color:#262626;transform:scaleX(0.937)">ИдентификаторЯщикДопДокументаВДиадок</div><div class="a" style="left:58px;top:413px;width:9px;height:4px;background:linear-gradient(#4060c0,#7fa2f0 50%,#3a56b0);border-radius:1px"></div><div class="t" style="left:74px;top:410px;color:#262626;transform:scaleX(0.9269)">СтатусОтправляемыхВПФ_Диадок</div><div class="a" style="left:58px;top:432px;width:9px;height:4px;background:linear-gradient(#4060c0,#7fa2f0 50%,#3a56b0);border-radius:1px"></div><div class="t" style="left:74px;top:429px;color:#262626;transform:scaleX(0.9037)">УсловноОтправленныйFileGUID</div><div class="a" style="left:58px;top:451px;width:9px;height:4px;background:linear-gradient(#4060c0,#7fa2f0 50%,#3a56b0);border-radius:1px"></div><div class="t" style="left:74px;top:448px;color:#262626;transform:scaleX(0.925)">Версия</div><div class="a" style="left:717px;top:346px;width:1px;height:2px;background:#6a4a2a"></div><div class="a" style="left:717px;top:348px;width:1px;height:4px;background:#dcc088"></div><div class="a" style="left:717px;top:365px;width:1px;height:2px;background:#6a4a2a"></div><div class="a" style="left:717px;top:367px;width:1px;height:4px;background:#dcc088"></div><div class="a" style="left:717px;top:384px;width:1px;height:2px;background:#6a4a2a"></div><div class="a" style="left:717px;top:386px;width:1px;height:4px;background:#dcc088"></div><div class="a" style="left:717px;top:403px;width:1px;height:2px;background:#6a4a2a"></div><div class="a" style="left:717px;top:405px;width:1px;height:4px;background:#dcc088"></div><div class="a" style="left:717px;top:422px;width:1px;height:2px;background:#6a4a2a"></div><div class="a" style="left:717px;top:424px;width:1px;height:4px;background:#dcc088"></div><div class="a" style="left:717px;top:441px;width:1px;height:2px;background:#6a4a2a"></div><div class="a" style="left:717px;top:443px;width:1px;height:4px;background:#dcc088"></div>

</div>
</body></html>
